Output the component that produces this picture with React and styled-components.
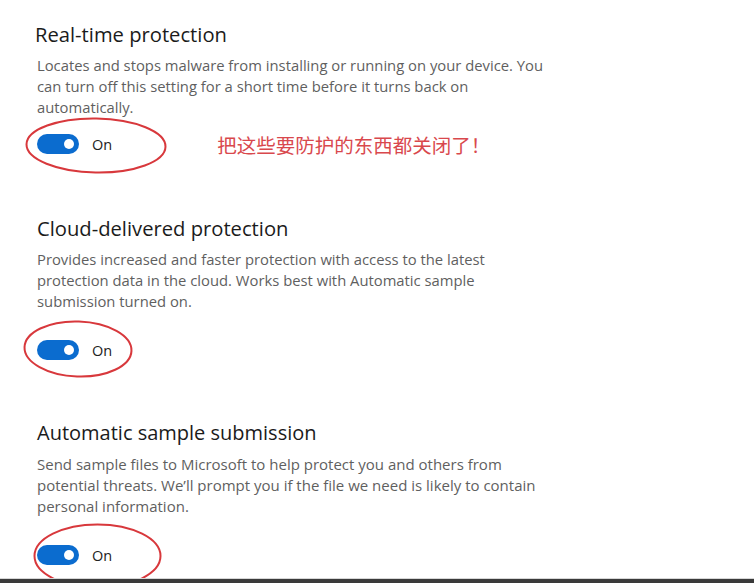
import styled, { createGlobalStyle } from "styled-components";

const GlobalStyle = createGlobalStyle`
  html, body {
    margin: 0;
    padding: 0;
    background: #ffffff;
  }
  body {
    font-family: "Open Sans", "Noto Sans", "Noto Sans CJK SC", sans-serif;
    overflow: hidden;
  }
`;

const Page = styled.div`
  width: 754px;
  height: 583px;
  display: flex;
  flex-direction: column;
  overflow: hidden;
  position: relative;
  background: #fff;
`;

const Content = styled.div`
  flex: 1;
  padding: 20px 0 0 37px;
  display: flex;
  flex-direction: column;
`;

const Section = styled.section`
  display: flex;
  flex-direction: column;
  margin-top: ${(p) => p.$top || 0}px;
`;

const Title = styled.h2`
  margin: 0 0 0 ${(p) => p.$shift || 0}px;
  font-size: ${(p) => p.$size}px;
  line-height: 28px;
  font-weight: 400;
  color: #1b1b1b;
  white-space: nowrap;
`;

const Desc = styled.p`
  margin: 7px 0 0;
  width: ${(p) => p.$width}px;
  font-size: ${(p) => p.$size}px;
  line-height: 21px;
  color: #5f5f5f;
`;

const ToggleRow = styled.div`
  position: relative;
  display: flex;
  align-items: center;
  height: 20px;
  margin-top: ${(p) => p.$gap}px;
`;

const Track = styled.span`
  width: 42px;
  height: 20px;
  border-radius: 10px;
  background: #0b6ccf;
  display: flex;
  align-items: center;
  justify-content: flex-end;
  padding-right: 5px;
  box-sizing: border-box;
`;

const Knob = styled.span`
  width: 10px;
  height: 10px;
  border-radius: 50%;
  background: #fff;
`;

const State = styled.span`
  margin-left: 13px;
  font-size: 14.5px;
  color: #222;
`;

const Note = styled.span`
  margin-left: 105px;
  font-family: "Noto Sans CJK SC", sans-serif;
  font-size: 19.5px;
  color: #d9484d;
`;

const Ring = styled.svg`
  position: absolute;
  pointer-events: none;
  overflow: visible;
`;

const BottomBar = styled.div`
  position: relative;
  z-index: 2;
  height: 4px;
  background: #3a3a3a;
  border-top: 1px solid #d6d6d6;
`;

function Circle({ left, top, width, height, tilt = 0 }) {
  return (
    <Ring
      width={width}
      height={height}
      viewBox={`0 0 ${width} ${height}`}
      style={{ left, top }}
    >
      <ellipse
        cx={width / 2}
        cy={height / 2}
        rx={width / 2 - 1.5}
        ry={height / 2 - 1.5}
        fill="none"
        stroke="#d8383c"
        strokeWidth="2"
        transform={`rotate(${tilt} ${width / 2} ${height / 2})`}
      />
    </Ring>
  );
}

function Toggle() {
  return (
    <Track>
      <Knob />
    </Track>
  );
}

const sections = [
  {
    title: "Real-time protection",
    titleSize: 20.2,
    shift: -2,
    top: 0,
    descSize: 14.8,
    descWidth: 515,
    desc:
      "Locates and stops malware from installing or running on your device. You can turn off this setting for a short time before it turns back on automatically.",
    gap: 16,
    ring: { left: -12, top: -17, width: 142, height: 57, tilt: 1 },
    note: "把这些要防护的东西都关闭了！",
  },
  {
    title: "Cloud-delivered protection",
    titleSize: 20.2,
    top: 60,
    descSize: 14.8,
    descWidth: 470,
    desc:
      "Provides increased and faster protection with access to the latest protection data in the cloud. Works best with Automatic sample submission turned on.",
    gap: 28,
    ring: { left: -14, top: -20, width: 110, height: 58, tilt: 2 },
  },
  {
    title: "Automatic sample submission",
    titleSize: 20,
    top: 59,
    descSize: 15,
    descWidth: 510,
    desc:
      "Send sample files to Microsoft to help protect you and others from potential threats. We’ll prompt you if the file we need is likely to contain personal information.",
    gap: 28,
    ring: { left: -4, top: -22, width: 129, height: 66, tilt: 0 },
  },
];

export default function App() {
  return (
    <>
      <GlobalStyle />
      <Page>
        <Content>
          {sections.map((s) => (
            <Section key={s.title} $top={s.top}>
              <Title $size={s.titleSize} $shift={s.shift}>
                {s.title}
              </Title>
              <Desc $size={s.descSize} $width={s.descWidth}>
                {s.desc}
              </Desc>
              <ToggleRow $gap={s.gap}>
                <Circle {...s.ring} />
                <Toggle />
                <State>On</State>
                {s.note && <Note>{s.note}</Note>}
              </ToggleRow>
            </Section>
          ))}
        </Content>
        <BottomBar />
      </Page>
    </>
  );
}
